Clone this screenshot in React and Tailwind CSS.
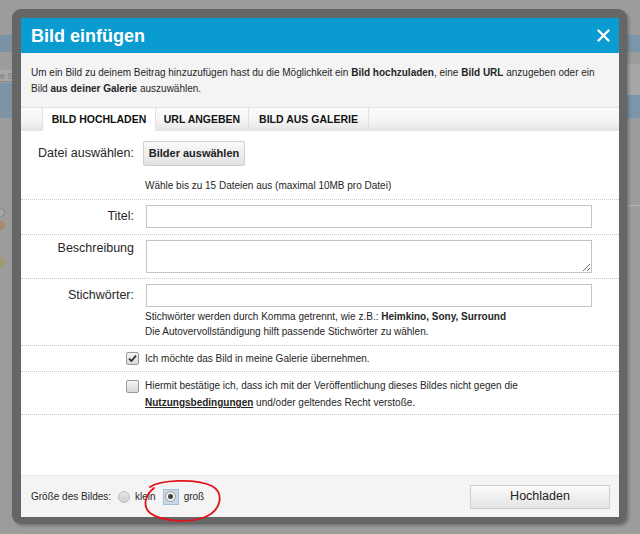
import React from "react";

function Checkbox({ checked }) {
  return (
    <span className="flex h-[13px] w-[13px] shrink-0 items-center justify-center rounded-[2px] border border-[#9a9a9a] bg-gradient-to-b from-[#f4f4f4] to-[#d9d9d9]">
      {checked ? (
        <svg width="9" height="9" viewBox="0 0 9 9">
          <path d="M1 4.6 L3.4 7 L8 1.6" fill="none" stroke="#333" strokeWidth="1.8" />
        </svg>
      ) : null}
    </span>
  );
}

function Sep() {
  return <div className="border-b border-dotted border-[#c8c8c8]" />;
}

export default function App() {
  return (
    <div
      className="relative h-[534px] w-[640px] overflow-hidden bg-[#9c9c9c] text-[#262626]"
      style={{ fontFamily: '"Liberation Sans", Arial, sans-serif' }}
    >
      {/* page behind the overlay */}
      <div className="flex h-full justify-between">
        <div className="flex w-[20px] flex-col">
          <div className="h-[35px]" />
          <div className="h-[17px] bg-[#7b92a3]" />
          <div className="h-[18px]" />
          <div className="h-[12px] border-b border-[#888] bg-[#a8a8a8] text-[9px] leading-[12px] text-[#777]">e S</div>
          <div className="h-[1px]" />
          <div className="h-[35px] bg-[#7c94a6]" />
          <div className="h-[90px]" />
          <div className="ml-[-4px] h-[9px] w-[9px] rounded-full border border-[#6f8f6f] bg-[#a8a8a8]" />
          <div className="h-[4px]" />
          <div className="ml-[-4px] h-[9px] w-[9px] rounded-full bg-[#a88a70]" />
          <div className="h-[28px]" />
          <div className="ml-[-4px] h-[9px] w-[9px] rounded-full bg-[#a29a6a]" />
        </div>
        <div className="flex w-[20px] flex-col">
          <div className="h-[35px]" />
          <div className="h-[17px] bg-[#7c96a9]" />
          <div className="h-[12px]" />
          <div className="h-[31px] bg-[#a6a6a6]" />
          <div className="h-[23px] bg-[#7c95a8]" />
          <div className="h-[87px]" />
          <div className="h-[1px] bg-[#b4b4b4]" />
        </div>
      </div>

      {/* modal */}
      <div className="absolute left-[12px] top-[9px] h-[515px] w-[615px] rounded-[9px] bg-[#666] pb-[7px] pl-[9px] pr-[8px] pt-[9px] shadow-[2px_2px_3px_rgba(0,0,0,0.25)]">
        <div className="flex h-full flex-col bg-white">
          <div className="flex h-[35px] items-center justify-between bg-[#0a9bd0] pl-[10px] pr-[9px]">
            <span className="pt-[2px] text-[18px] font-bold text-white">Bild einfügen</span>
            <svg width="13" height="13" viewBox="0 0 13 13">
              <path d="M1.5 1.5 L11.5 11.5 M11.5 1.5 L1.5 11.5" stroke="white" strokeWidth="2.4" strokeLinecap="round" />
            </svg>
          </div>

          <div className="h-[54px] bg-[#f4f4f4] pl-[10px] pt-[12px] text-[10px] leading-[16px] whitespace-nowrap">
            Um ein Bild zu deinem Beitrag hinzuzufügen hast du die Möglichkeit ein <b>Bild hochzuladen</b>, eine <b>Bild URL</b> anzugeben oder ein
            <br />
            Bild <b>aus deiner Galerie</b> auszuwählen.
          </div>

          <div className="flex h-[24px] border-t border-[#e2e2e2] bg-gradient-to-b from-[#fbfbfb] via-[#f6f6f6] to-[#e4e4e4] text-[10.5px] font-bold text-[#111]">
            <div className="w-[21px]" />
            <div className="flex w-[114px] items-center justify-center border-x border-[#e2e2e2] bg-white">BILD HOCHLADEN</div>
            <div className="flex w-[93px] items-center justify-center border-r border-[#e2e2e2]">URL ANGEBEN</div>
            <div className="flex w-[120px] items-center justify-center border-r border-[#e2e2e2]">BILD AUS GALERIE</div>
          </div>

          <div className="flex flex-1 flex-col">
            {/* Datei */}
            <div className="flex pt-[10px] pb-[6px]">
              <div className="flex h-[25px] w-[113px] items-center justify-end text-[12.5px]">Datei auswählen:</div>
              <div className="ml-[9px] flex flex-col">
                <button className="h-[25px] w-[102px] rounded-[2px] border border-[#cfcfcf] bg-gradient-to-b from-[#fafafa] to-[#e2e2e2] text-[11px] font-bold text-[#222]">
                  Bilder auswählen
                </button>
                <div className="ml-[2px] mt-[13px] text-[10px] leading-[14px]">Wähle bis zu 15 Dateien aus (maximal 10MB pro Datei)</div>
              </div>
            </div>
            <Sep />

            {/* Titel */}
            <div className="flex items-center pt-[5px] pb-[6px]">
              <div className="w-[113px] text-right text-[12.5px]">Titel:</div>
              <input className="ml-[12px] h-[23px] w-[446px] border border-[#c4c4c4] bg-white outline-none" />
            </div>
            <Sep />

            {/* Beschreibung */}
            <div className="flex pt-[5px] pb-[5px]">
              <div className="w-[113px] text-right text-[12.5px] leading-[16px]">Beschreibung</div>
              <textarea className="ml-[12px] h-[33px] w-[446px] resize-y border border-[#c4c4c4] bg-white outline-none" />
            </div>
            <Sep />

            {/* Stichwörter */}
            <div className="flex pt-[5px] pb-[6px]">
              <div className="w-[113px] text-right text-[12.5px] leading-[23px]">Stichwörter:</div>
              <div className="ml-[12px] flex flex-col">
                <input className="h-[23px] w-[446px] border border-[#c4c4c4] bg-white outline-none" />
                <div className="ml-[-1px] mt-[2px] text-[10px] leading-[15px] whitespace-nowrap">
                  Stichwörter werden durch Komma getrennt, wie z.B.: <b>Heimkino, Sony, Surround</b>
                  <br />
                  Die Autovervollständigung hilft passende Stichwörter zu wählen.
                </div>
              </div>
            </div>
            <Sep />

            {/* Galerie */}
            <div className="flex h-[25px] items-center gap-[6px] pl-[105px] text-[10px]">
              <Checkbox checked />
              <span>Ich möchte das Bild in meine Galerie übernehmen.</span>
            </div>
            <Sep />

            {/* Nutzungsbedingungen */}
            <div className="flex gap-[6px] pb-[3px] pl-[105px] pt-[5px] text-[10px] leading-[17px]">
              <div className="pt-[3px]">
                <Checkbox />
              </div>
              <div className="whitespace-nowrap">
                Hiermit bestätige ich, dass ich mit der Veröffentlichung dieses Bildes nicht gegen die
                <br />
                <b className="underline">Nutzungsbedingungen</b> und/oder geltendes Recht verstoße.
              </div>
            </div>
            <Sep />
          </div>

          {/* footer */}
          <div className="flex h-[42px] items-center justify-between border-t border-[#e6e6e6] bg-[#f4f4f4] pl-[10px] pr-[9px] text-[10px]">
            <div className="flex items-center">
              <span>Größe des Bildes:</span>
              <span className="ml-[7px] h-[12px] w-[12px] rounded-full border border-[#bdbdbd] bg-gradient-to-b from-[#e8e8e8] to-[#cfcfcf]" />
              <span className="ml-[5px]">klein</span>
              <span className="ml-[8px] flex h-[14px] w-[14px] items-center justify-center bg-[#c9d9ea] ring-1 ring-[#a8bcd4]">
                <span className="flex h-[11px] w-[11px] items-center justify-center rounded-full border border-[#9a9a9a] bg-[#eee]">
                  <span className="h-[5px] w-[5px] rounded-full bg-[#444]" />
                </span>
              </span>
              <span className="ml-[6px]">groß</span>
            </div>
            <button className="h-[24px] w-[140px] border border-[#cfcfcf] bg-gradient-to-b from-[#fbfbfb] to-[#e4e4e4] text-[12.5px] text-[#222]">
              Hochladen
            </button>
          </div>
        </div>
      </div>

      {/* hand drawn red mark */}
      <svg className="absolute left-[140px] top-[476px]" width="90" height="52" viewBox="0 0 90 52">
        <path
          d="M10 11 C20 4, 55 2, 72 10 C84 17, 82 34, 65 41 C50 47, 22 46, 10 37 C3 31, 4 20, 14 12"
          fill="none"
          stroke="#e0141a"
          strokeWidth="1.8"
          strokeLinecap="round"
        />
      </svg>
    </div>
  );
}
